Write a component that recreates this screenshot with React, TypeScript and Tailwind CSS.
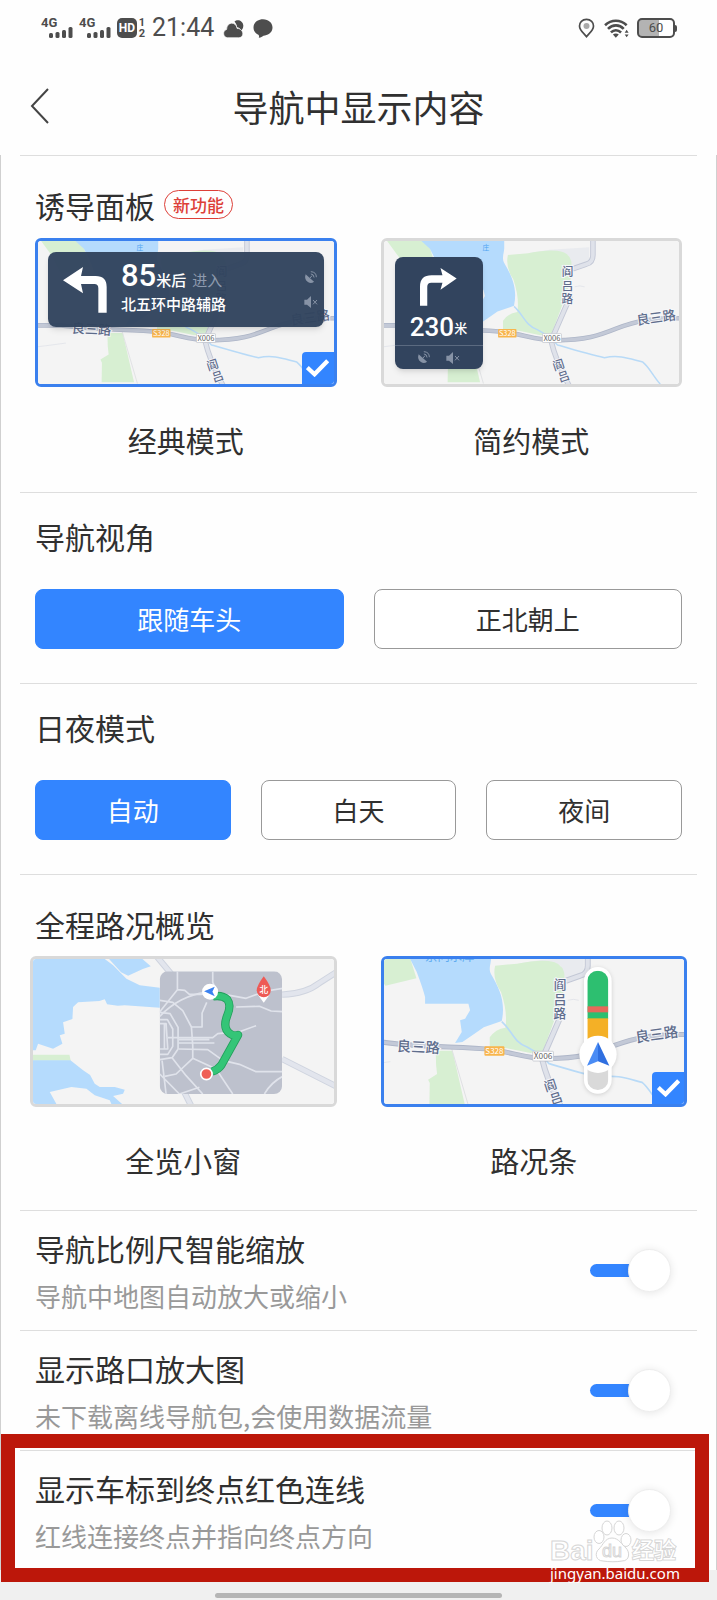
import React, { ReactNode, useState } from "react";

/* ---------- status bar ---------- */

const Signal = () => (
  <div className="flex w-8 flex-col">
    <span className="font-[Roboto] text-[13px] leading-[10px] font-bold">4G</span>
    <svg viewBox="0 0 32 11" className="-mt-px h-[11px] w-8" fill="currentColor">
      <rect x="8" y="6" width="4" height="5" rx="1.5" />
      <rect x="14.500" y="5" width="4" height="6" rx="1.5" />
      <rect x="21" y="3" width="4" height="8" rx="1.5" />
      <rect x="27.500" y="0" width="4" height="11" rx="1.5" />
    </svg>
  </div>
);

const StatusBar = () => (
  <div className="flex h-14 items-center justify-between pr-10 pl-[41px] text-[#4d4d4d]">
    <div className="flex items-center">
      <Signal />
      <div className="ml-[6px]">
        <Signal />
      </div>
      <div className="ml-[6px] flex h-5 w-5 items-center justify-center rounded-[5px] bg-[#4d4d4d] font-[Roboto] text-[12px] font-bold text-white">
        HD
      </div>
      <div className="ml-px flex w-2 flex-col items-center font-[Roboto] text-[11px] leading-[11px] font-bold">
        <span>1</span>
        <span>2</span>
      </div>
      <span className="ml-[6px] font-[Roboto] text-[25px] leading-7">21:44</span>
      <svg viewBox="0 0 62 58" className="ml-[9px] h-[19px] w-[21px]" fill="currentColor">
        <path d="M34 8C42-1 60 4 61 20c0 8-3 12-6 15-3-6-8-9-13-10-1-7-4-12-8-17z" />
        <path d="M13 57C-2 57-3 35 10 32c0-24 29-26 32-3 20-1 24 28 5 28z" stroke="#fefefe" strokeWidth="2" />
      </svg>
      <svg viewBox="0 0 60 58" className="ml-[9px] h-[19px] w-5" fill="currentColor">
        <path d="M30 1c17 0 29 11 29 25 0 13-10 22-23 24-6 0-12 7-19 7 2-4 1-6-1-9C7 44 1 36 1 26 1 12 13 1 30 1z" />
      </svg>
    </div>
    <div className="flex items-center">
      <svg viewBox="0 0 50 60" className="h-5 w-[17px]" fill="none" stroke="currentColor" strokeWidth="5">
        <path d="M25 4c13 0 21 9 21 20 0 10-7 17-13 23l-8 9-8-9C11 41 4 34 4 24 4 13 12 4 25 4z" />
        <circle cx="25" cy="24" r="9" fill="#aaa" stroke="none" />
      </svg>
      <svg viewBox="0 0 76 58" className="ml-[9px] h-[19px] w-[25px]" fill="none" stroke="currentColor" strokeWidth="8">
        <path d="M3 19C22 1 50 1 69 19" />
        <path d="M12 30C26 16 47 16 60 30" />
        <path d="M21 41c9-9 21-9 31 0" />
        <path d="M27 47c5-4 13-4 18 0l-9 10z" fill="currentColor" stroke="none" />
        <path d="M63 42l6-9 6 9zM63 47l6 9 6-9z" fill="currentColor" stroke="none" />
      </svg>
      <div className="ml-2 flex h-5 w-[38px] items-center justify-center rounded-[5px] border-2 border-[#4d4d4d] bg-linear-to-r from-[#b3b3b3] from-60% to-white to-60% font-[Roboto] text-[13px]">
        60
      </div>
      <div className="h-[7px] w-[2px] rounded-r bg-[#4d4d4d]" />
    </div>
  </div>
);

/* ---------- map drawings ---------- */

const RoadName = ({ x, y, r, children, size = 43 }: { x: number; y: number; r: number; children: ReactNode; size?: number }) => (
  <text
    x={x}
    y={y}
    fontSize={size}
    fontWeight="500"
    textAnchor="middle"
    dominantBaseline="central"
    transform={`rotate(${r} ${x} ${y})`}
    fill="#5f6d8c"
    stroke="#f6f7fa"
    strokeWidth="6"
    paintOrder="stroke"
  >
    {children}
  </text>
);

const CountryMap = ({ viewBox, lakeName = false }: { viewBox: string; lakeName?: boolean }) => (
  <svg viewBox={viewBox} preserveAspectRatio="xMidYMid slice" className="block h-full w-full bg-[#f4f4f4]">
    <path d="M-61-26H58L80 0 98 58Q50 70 5 80-10 60-23 26z" fill="#d7efd2" />
    <path
      d="M51-26H322V0C320 20 314 30 322 46 348 90 366 130 354 186L300 205Q262 232 236 249L214 252 234 219 229 184 244 179 259 154 254 134H124V114Q118 90 99 39L79 0z"
      fill="#b5dbfd"
    />
    <path d="M400 14L470 3 600-5V40L545 58 530 20z" fill="#e9ebef" />
    <path d="M334 20L400 14Q460 2 495 6 534 10 541 40 548 80 528 140L478 275 440 282 370 268 318 264V235Q335 210 365 206 372 160 352 100 325 60 334 20z" fill="#d7efd2" />
    <path d="M156 275H206L243 436H137L138 372 133 362 160 345 157 318z" fill="#d7efd2" />
    <path d="M204 270L254 440" stroke="#dfe0e3" strokeWidth="3" fill="none" />
    <path d="M-71 320L20 308M552 124Q570 118 585 124" stroke="#e3e5ea" strokeWidth="3" fill="none" />
    <path
      d="M354 188C385 215 390 250 430 264 460 280 480 295 496 314 550 330 600 345 650 356 700 344 740 362 775 370 795 385 808 415 832 442"
      stroke="#b8daf7"
      strokeWidth="5"
      fill="none"
    />
    <g fill="none" strokeLinecap="round">
      <path d="M612-30V20Q612 45 590 50L550 64M536 160L475 300Q490 365 533 445" stroke="#c3c8d6" strokeWidth="18" />
      <path d="M612-30V20Q612 45 590 50L550 64M536 160L475 300Q490 365 533 445" stroke="#dfe2ea" strokeWidth="12" />
      <path d="M-80 250L0 250C120 266 220 262 330 272 400 285 440 300 490 299 590 298 630 284 690 260 750 238 800 225 910 227" stroke="#aeb6c8" strokeWidth="15" />
      <path d="M-80 250L0 250C120 266 220 262 330 272 400 285 440 300 490 299 590 298 630 284 690 260 750 238 800 225 910 227" stroke="#c3c9d7" strokeWidth="10" />
    </g>
    <RoadName x={104} y={260} r={3}>良三路</RoadName>
    <RoadName x={818} y={222} r={-8}>良三路</RoadName>
    <RoadName x={529} y={74} r={0} size={38}>阎</RoadName>
    <RoadName x={529} y={117} r={0} size={38}>吕</RoadName>
    <RoadName x={528} y={160} r={0} size={38}>路</RoadName>
    <RoadName x={499} y={377} r={-18} size={38}>阎</RoadName>
    <RoadName x={516} y={415} r={-18} size={38}>吕</RoadName>
    <rect x="302" y="262" width="60" height="28" rx="3" fill="#f8b54c" />
    <text x="332" y="285" textAnchor="middle" fontSize="24" fill="#fff">S328</text>
    <rect x="447" y="277" width="62" height="29" rx="2" fill="#fff" stroke="#b9bcc4" strokeWidth="2" />
    <text x="478" y="300" textAnchor="middle" fontSize="25" fill="#666">X006</text>
    {lakeName ? (
      <text x="198" y="6" textAnchor="middle" fontSize="37" fill="#60abf0">京问水库</text>
    ) : (
      <text x="262" y="4" textAnchor="middle" fontSize="22" fill="#4fa3f2">
        庄
      </text>
    )}
  </svg>
);

const CityMap = () => (
  <svg viewBox="0 0 903 435" preserveAspectRatio="xMidYMid slice" className="block h-full w-full bg-[#f4f4f4]">
    <path
      d="M0 0H216L241 19 281 59 321 79 381 86V146L276 139 255 140 223 136 216 121 200 126 136 130 121 144 119 180 91 190 96 224 81 229 89 254 61 269 16 254 9 274H0z"
      fill="#b5dbfd"
    />
    <path d="M229 0H329L354 22 330 30 286 50 265 40z" fill="#b5dbfd" />
    <path d="M0 287H110L114 305H0z" fill="#d7efd2" />
    <path d="M0 304H113L151 334 172 348 186 374 201 384 246 384 276 392 271 404 241 411 268 435H0z" fill="#b5dbfd" />
    <path d="M51 399L116 384 161 389 186 409 231 424 236 435H71z" fill="#f4f4f4" />
    <g fill="none" stroke="#cfd4df" strokeWidth="19">
      <path d="M370-10L420 50M748 107Q820 104 860 72L910 40M748 300L910 382M455 400L475 440" />
      <path d="M370-10L420 50M748 107Q820 104 860 72L910 40M748 300L910 382M455 400L475 440" stroke="#e2e5ed" strokeWidth="13" />
    </g>
    <clipPath id="overview">
      <rect x="381" y="37" width="367" height="368" rx="24" />
    </clipPath>
    <g clipPath="url(#overview)">
      <rect x="381" y="37" width="367" height="368" fill="#bdc1cd" />
      <g fill="none" stroke="#e0e3eb" strokeWidth="5" strokeLinejoin="round">
        <path d="M434 37V92L380 160M434 92L456 94 470 106 505 106 530 98 640 118 700 96 750 88M540 37V70L552 96" />
        <path d="M381 124L420 130 450 155 476 204 480 260V298L550 330 600 405" />
        <path d="M381 160L412 164 436 205V270L418 296 381 302M381 182H404L420 210V262L405 286H381" />
        <path d="M395 194V270M381 194H400L405 270H381M381 172Q440 110 520 100" />
        <path d="M405 236H540L555 224 620 218 670 200M438 252H545M438 242H530" />
        <path d="M476 204H508V162L522 130M610 144L680 142 715 156 750 158" />
        <path d="M438 270L525 272 570 304 620 316 670 338H750M480 298L430 345 396 352" />
        <path d="M388 305L400 405M418 296L460 350 510 405M440 405L500 385M750 352Q715 370 695 405M381 345L440 405" />
      </g>
    </g>
    <path d="M541 112Q570 108 584 122 596 138 584 168 568 208 592 224 602 232 616 228L566 318Q556 332 538 338" fill="none" stroke="#249f5c" strokeWidth="25" strokeLinejoin="round" />
    <path d="M541 112Q570 108 584 122 596 138 584 168 568 208 592 224 602 232 616 228L566 318Q556 332 538 338" fill="none" stroke="#34c577" strokeWidth="20" strokeLinejoin="round" />
    <circle cx="532" cy="98" r="24" fill="#fff" />
    <path d="M514 97L546 83 539 98 546 112z" fill="#3b82f0" />
    <circle cx="521" cy="345" r="17" fill="#ef5f56" stroke="#fff" strokeWidth="5" />
    <path d="M676 108H710L693 131z" fill="#fff" />
    <path d="M693 52Q714 80 714 94A21 21 0 0 1 672 94Q672 80 693 52z" fill="#ee5a55" />
    <text x="693" y="102" textAnchor="middle" fontSize="26" fontWeight="500" fill="#fff">北</text>
  </svg>
);

const TrafficBar = () => (
  <svg viewBox="0 0 114 390" className="absolute top-[7px] right-[67px] h-[130px] w-[38px] drop-shadow-sm">
    <clipPath id="bar">
      <rect x="25" y="14" width="63" height="358" rx="31" />
    </clipPath>
    <rect x="15" y="3" width="83" height="380" rx="41" fill="#fff" />
    <g clipPath="url(#bar)">
      <rect x="25" y="14" width="63" height="145" fill="#2dbf70" />
      <rect x="25" y="121" width="63" height="18" fill="#e5695a" />
      <rect x="25" y="157" width="63" height="100" fill="#f4b026" />
      <rect x="25" y="257" width="63" height="130" fill="#d9d9d9" />
    </g>
    <circle cx="57" cy="265" r="56" fill="#fff" />
    <path d="M57 228L24 299 57 286z" fill="#4a8cf5" />
    <path d="M57 228L91 299 57 286z" fill="#2f6fe0" />
  </svg>
);

/* ---------- guidance panels ---------- */

const Satellite = () => (
  <svg viewBox="0 0 40 40" className="h-[13px] w-[13px]" fill="none" stroke="#8793a6" strokeWidth="3">
    <path d="M5 10L31 33Q22 40 12 34 0 25 5 10z" fill="#8793a6" stroke="none" />
    <path d="M18 22L25 14M21 9Q30 9 31 20M21 2Q38 3 38 19" />
  </svg>
);

const Muted = () => (
  <svg viewBox="0 0 42 36" className="h-3 w-[14px]" fill="#8793a6">
    <path d="M1 11H9L21 0V36L9 26H1z" />
    <path d="M27 12L39 25M39 12L27 25" stroke="#8793a6" strokeWidth="3" />
  </svg>
);

const ClassicPanel = () => (
  <div className="absolute top-[11px] right-[10px] left-[10px] flex h-[75px] items-center rounded-lg bg-[#32445e]/97 pr-[6px] pl-[15px] text-white shadow-md">
    <svg viewBox="0 0 132 138" className="h-[46px] w-11" fill="#fff">
      <path d="M0 40L60 0 54 27H98Q131 27 131 60V137H106V64Q106 51 94 51H54L60 79z" />
    </svg>
    <div className="ml-[14px] flex-1 pb-[3px] text-left">
      <div className="flex items-baseline text-[15px] leading-7 font-medium">
        <span className="font-[Roboto] text-[31px]">85</span>
        <span>米后</span>
        <span className="ml-[6px] font-normal text-[#8e9aae]">进入</span>
      </div>
      <div className="text-[15px] leading-5 font-medium">北五环中路辅路</div>
    </div>
    <div className="flex flex-col gap-3">
      <Satellite />
      <Muted />
    </div>
  </div>
);

const SimplePanel = () => (
  <div className="absolute top-4 left-[11px] flex h-28 w-[88px] flex-col items-center rounded-lg bg-[#32445e] text-white shadow-md">
    <svg viewBox="0 0 112 115" className="mt-[11px] h-[38px] w-[37px]" fill="#fff">
      <path d="M111 32L62 0 68 22H35Q0 22 0 56V114H22V57Q22 45 34 45H68L62 66z" />
    </svg>
    <div className="flex h-[39px] items-center text-[13px] font-medium">
      <span className="pt-1 font-[Roboto] text-[26px]">230</span>
      <span className="pt-1">米</span>
    </div>
    <div className="flex w-full flex-1 items-center justify-center gap-4 border-t border-[#5b6a80]">
      <Satellite />
      <Muted />
    </div>
  </div>
);

/* ---------- building blocks ---------- */

interface SectionProps {
  title: string;
  badge?: string;
  className?: string;
  children: ReactNode;
}

const Section: React.FC<SectionProps> = ({ title, badge, className = "", children }) => (
  <section className={`mx-[19px] border-t border-[#dedede] px-[15px] ${className}`}>
    <div className="flex items-center">
      <h2 className="text-[30px] leading-[45px]">{title}</h2>
      {badge && (
        <span className="mb-[2px] ml-[9px] flex h-[29px] items-center rounded-full border border-[#dd3f38] px-2 text-[17px] font-medium text-[#dd3f38]">
          {badge}
        </span>
      )}
    </div>
    {children}
  </section>
);

interface PreviewOptionProps {
  name: string;
  label: string;
  checked: boolean;
  onSelect: () => void;
  pictureClass: string;
  children: ReactNode;
}

const PreviewOption: React.FC<PreviewOptionProps> = ({ name, label, checked, onSelect, pictureClass, children }) => (
  <label className="block cursor-pointer text-center">
    <input type="radio" name={name} checked={checked} onChange={onSelect} className="sr-only" />
    <div className={`relative overflow-hidden rounded-md border-3 ${checked ? "border-[#3a80ee]" : "border-[#d9d9d9]"} ${pictureClass}`}>
      {children}
      {checked && (
        <span className="absolute right-0 bottom-0 flex h-8 w-8 items-center justify-center rounded-tl bg-[#3385ff]">
          <svg viewBox="0 0 70 54" className="h-[18px] w-[23px]" fill="none" stroke="#fff" strokeWidth="13">
            <path d="M4 26L26 46 66 5" />
          </svg>
        </span>
      )}
    </div>
    <span className="mt-[31px] block text-[29px] leading-[45px]">{label}</span>
  </label>
);

interface SegmentsProps {
  options: string[];
  value: string;
  onChange: (v: string) => void;
}

const Segments: React.FC<SegmentsProps> = ({ options, value, onChange }) => (
  <div className="mt-[30px] flex gap-[30px]">
    {options.map((o) => (
      <button
        key={o}
        type="button"
        aria-pressed={o === value}
        onClick={() => onChange(o)}
        className={`h-[60px] flex-1 rounded-lg border pb-[2px] text-[26px] ${
          o === value ? "border-[#3385ff] bg-[#3385ff] text-white" : "border-[#999] bg-white"
        }`}
      >
        {o}
      </button>
    ))}
  </div>
);

interface ToggleRowProps {
  id: string;
  title: string;
  hint: string;
  children?: ReactNode;
}

const ToggleRow: React.FC<ToggleRowProps> = ({ id, title, hint, children }) => (
  <div className="relative">
    <div className="mx-[19px] flex items-center justify-between border-t border-[#dedede] pr-[26px] pl-[15px]">
      <label htmlFor={id} className="block pt-[15px] pb-[15px]">
        <span className="block text-[30px] leading-[45px]">{title}</span>
        <span className="mt-[5px] block text-[26px] leading-[39px] text-[#999]">{hint}</span>
      </label>
      <input
        id={id}
        type="checkbox"
        role="switch"
        defaultChecked
        className="relative h-[43px] w-[81px] shrink-0 appearance-none before:absolute before:top-[15px] before:left-0 before:h-[13px] before:w-[60px] before:rounded-full before:bg-[#ccc] after:absolute after:top-0 after:left-0 after:h-[43px] after:w-[43px] after:rounded-full after:border after:border-[#eee] after:bg-white after:shadow-[0_1px_8px_rgba(0,0,0,0.1)] checked:before:bg-[#3385ff] checked:after:left-[38px]"
      />
    </div>
    {children}
  </div>
);

const Watermark = () => (
  <div className="pointer-events-none absolute right-[39px] -bottom-3 w-[127px]">
    <svg viewBox="0 0 127 44" className="block h-11 w-full" fill="#fff" stroke="#d6d6d6" strokeWidth="1">
      <text x="0" y="40" fontSize="28" fontFamily="Liberation Sans" fontWeight="bold">Bai</text>
      <ellipse cx="49" cy="17" rx="5" ry="6.500" />
      <ellipse cx="57" cy="8" rx="5" ry="7" />
      <ellipse cx="69" cy="8" rx="5" ry="7" />
      <ellipse cx="76" cy="20" rx="5" ry="6.500" />
      <path d="M62 18C55 18 53 25 49 29 44 33 46 41 53 41 59 42 67 42 72 41 80 41 80 32 76 28 72 25 69 18 62 18z" />
      <text x="52" y="37" fontSize="18" fontFamily="Liberation Sans">du</text>
      <text x="82" y="38" fontSize="22" strokeWidth="2" paintOrder="stroke">经验</text>
    </svg>
    <p className="font-['Noto_Sans'] text-[15px] leading-[18px] text-white">jingyan.baidu.com</p>
  </div>
);

const App = () => {
  const [panel, setPanel] = useState("classic");
  const [view, setView] = useState("跟随车头");
  const [theme, setTheme] = useState("自动");
  const [overview, setOverview] = useState("bar");

  return (
    <div className="flex min-h-screen flex-col overflow-hidden bg-[#fefefe] font-['Noto_Sans_CJK_SC',sans-serif] text-[#303030]">
      <StatusBar />
      <header className="grid grid-cols-[80px_1fr_80px] items-center pt-[23px] pb-[22px]">
        <button type="button" aria-label="返回" className="pl-[30px]">
          <svg viewBox="0 0 20 36" className="h-9 w-5" fill="none" stroke="#444" strokeWidth="2">
            <path d="M18 1L2 18 18 35" />
          </svg>
        </button>
        <h1 className="text-center text-4xl leading-[54px]">导航中显示内容</h1>
      </header>

      <main className="border-x border-[#d0d0d0]">
        <Section title="诱导面板" badge="新功能" className="pt-[27px] pb-[29px]">
          <div className="mt-[10px] grid grid-cols-2 gap-11">
            <PreviewOption
              name="panel"
              label="经典模式"
              checked={panel === "classic"}
              onSelect={() => setPanel("classic")}
              pictureClass="h-[149px]"
            >
              <CountryMap viewBox="-71 -26 966 468" />
              <ClassicPanel />
            </PreviewOption>
            <PreviewOption
              name="panel"
              label="简约模式"
              checked={panel === "simple"}
              onSelect={() => setPanel("simple")}
              pictureClass="h-[149px]"
            >
              <CountryMap viewBox="-71 -26 966 468" />
              <SimplePanel />
            </PreviewOption>
          </div>
        </Section>

        <Section title="导航视角" className="pt-[21px] pb-[34px]">
          <Segments options={["跟随车头", "正北朝上"]} value={view} onChange={setView} />
        </Section>

        <Section title="日夜模式" className="pt-[21px] pb-[34px]">
          <Segments options={["自动", "白天", "夜间"]} value={theme} onChange={setTheme} />
        </Section>

        <Section title="全程路况概览" className="pt-[27px] pb-[27px]">
          <div className="-mx-[5px] mt-[9px] grid grid-cols-2 gap-11">
            <PreviewOption
              name="overview"
              label="全览小窗"
              checked={overview === "window"}
              onSelect={() => setOverview("window")}
              pictureClass="h-[151px]"
            >
              <CityMap />
            </PreviewOption>
            <PreviewOption
              name="overview"
              label="路况条"
              checked={overview === "bar"}
              onSelect={() => setOverview("bar")}
              pictureClass="h-[151px]"
            >
              <CountryMap viewBox="0 0 903 435" lakeName />
              <TrafficBar />
            </PreviewOption>
          </div>
        </Section>

        <ToggleRow id="zoom" title="导航比例尺智能缩放" hint="导航中地图自动放大或缩小" />
        <ToggleRow id="junction" title="显示路口放大图" hint="未下载离线导航包,会使用数据流量" />
        <ToggleRow id="redline" title="显示车标到终点红色连线" hint="红线连接终点并指向终点方向">
          <div className="pointer-events-none absolute -top-4 right-[7px] -bottom-3 left-0 border-14 border-[#bc170a]" />
          <Watermark />
        </ToggleRow>
      </main>

      <footer className="flex flex-1 items-end justify-center bg-[#f0f0f0] pb-[2px]">
        <div className="mt-[23px] h-[5px] w-2/5 rounded-full bg-[#b5b5b5]" />
      </footer>
    </div>
  );
};

export default App;
